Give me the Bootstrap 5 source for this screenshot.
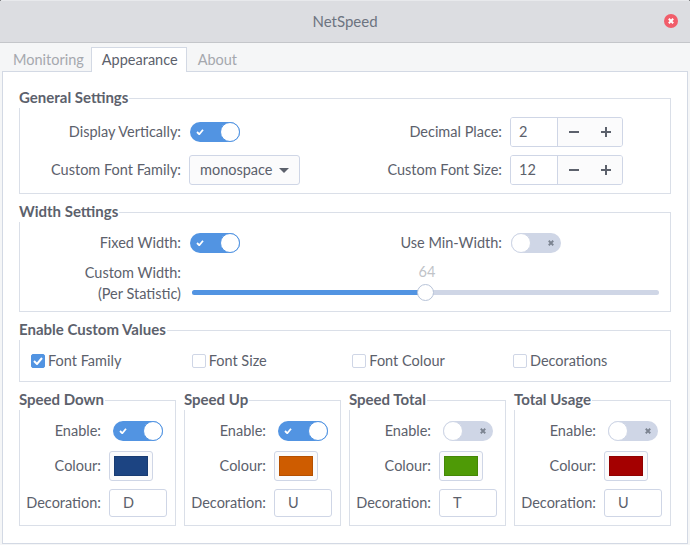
<!DOCTYPE html>
<html lang="en">
<head>
    <meta charset="UTF-8">
    <meta name="viewport" content="width=device-width, initial-scale=1.0">
    <title>NetSpeed</title>
    <link href="https://cdn.jsdelivr.net/npm/bootstrap@5.3.1/dist/css/bootstrap.min.css" rel="stylesheet">
    <style>
        html, body { height: 100%; margin: 0; overflow: hidden; }
        html { background: #2f3136; }
        body { background: #f5f6f7; color: #5c616c; font: 14.5px/20px Lato, sans-serif; border-radius: 2px 2px 0 0; }
        .win-title { height: 43px; background: #dcdde1; border-bottom: 1px solid #c4c6ca; border-top: 1px solid #e8e9ec; border-radius: 2px 2px 0 0; color: #6d7480; font-size: 15px; padding-bottom: 2px; }
        .win-close { right: 12px; top: 13px; width: 14px; height: 14px; }
        .tab-row { height: 29px; padding-left: 2px; }
        .tab-item { padding: 7px 7px 0 11px; color: #a5a8ae; height: 29px; }
        .tab-item.on { background: #fff; color: #5c616c; border: 1px solid #d3d9e4; border-bottom: 0; padding: 2px 8px 0 10px; margin-top: 4px; height: 25px; position: relative; z-index: 1; }
        .tab-body { background: #fff; border: 1px solid #d3d9e4; margin: -1px 2px 0 2px; height: 473px; padding: 16px 16px 0 16px; }
        fieldset.frame { border: 1px solid #dadfe8; margin: 0 0 8px 0; padding: 0; background: #fff; }
        fieldset.frame > legend { float: none; width: auto; margin: 0 0 0 -1px; padding: 0 1px 2px 0; font-size: 15px; line-height: 18px; font-weight: 700; color: #5c616c; }
        .set-row { display: flex; align-items: center; }
        .lbl-a, .lbl-b { text-align: right; margin-right: 8px; flex: none; }
        .lbl-a { width: 161px; }
        .lbl-b { width: 81px; }
        .col-a { width: 321px; flex: none; display: flex; align-items: center; }
        .tgl { width: 50px; height: 20px; border-radius: 10px; display: flex; align-items: center; justify-content: space-between; flex: none; margin-left: 1px; }
        .tgl.on { background: #5294e2; padding-left: 6px; }
        .tgl.off { background: #cfd6e6; flex-direction: row-reverse; padding-right: 7px; }
        .tgl .knob { width: 20px; height: 20px; border-radius: 50%; background: #fff; border: 1px solid #cfd6e6; }
        .tgl.on .knob { border-color: #5294e2; }
        .ctl { height: 30px; border: 1px solid #cfd6e6; border-radius: 3px; background: #fbfbfc; color: #5c616c; padding: 0 10px; font-size: 14.5px; display: flex; align-items: center; justify-content: space-between; }
        .ctl.caret-btn { width: 111px; }
        .caret-mark { width: 0; height: 0; border-left: 5px solid transparent; border-right: 5px solid transparent; border-top: 5px solid #5c616c; }
        .spin-box { display: flex; width: 113px; height: 30px; border: 1px solid #cfd6e6; border-radius: 3px; flex: none; overflow: hidden; }
        .spin-val { width: 47px; padding-left: 8px; background: #fff; border-right: 1px solid #cfd6e6; line-height: 28px; }
        .spin-btn { width: 32px; display: flex; align-items: center; justify-content: center; background: #fbfbfc; }
        .slide-box { position: relative; width: 467px; height: 5px; background: #cfd6e6; border-radius: 3px; margin-left: 3px; margin-top: 19px; flex: none; }
        .slide-fill { height: 5px; background: #5294e2; border-radius: 3px 0 0 3px; }
        .slide-knob { position: absolute; top: -6px; width: 17px; height: 17px; margin-left: -8px; border-radius: 50%; background: #fff; border: 1px solid #b7c3d8; }
        .slide-num { position: absolute; top: -28px; width: 40px; margin-left: -18px; text-align: center; color: #c0c3c8; }
        .chk-item { width: 160.67px; flex: none; display: flex; align-items: center; gap: 3px; }
        .chk-box { width: 14px; height: 14px; border-radius: 2px; border: 1px solid #cfd6e6; background: #fff; display: flex; align-items: center; justify-content: center; }
        .chk-box.on { background: #5294e2; border-color: #5294e2; }
        .stat-frame { width: 157px; flex: none; margin-bottom: 0 !important; }
        .swatch-btn { width: 44px; height: 30px; border: 1px solid #cfd6e6; border-radius: 3px; background: #fbfbfc; padding: 4px; }
        .swatch-btn span { display: block; width: 100%; height: 100%; border: 1px solid rgba(0,0,0,.12); }
        .deco-box { width: 58px; height: 28px; border: 1px solid #cfd6e6; border-radius: 3px; background: #fff; padding-left: 13px; line-height: 26px; }
        .frame-general { padding: 9px 0 8px; }
        .frame-width { padding: 11px 0 7px; }
        .width-slide { margin-top: 9px; }
        .width-slide .lbl-a { line-height: 21px; }
        .frame-check { padding: 11px 0 10px 11px; }
        .frame-stat { padding: 11px 0 8px; }
        .stat-tgl { margin-left: 4px; }
        .stat-mid { margin: 10px 0 8px; }
    </style>
</head>

<body>
    <div class="win-title position-relative d-flex align-items-center justify-content-center">
        <span>NetSpeed</span>
        <svg class="win-close position-absolute" viewBox="0 0 14 14"><circle cx="7" cy="7" r="7" fill="#f15d6a"/><path d="M4.8 4.8l4.4 4.4M9.2 4.8l-4.4 4.4" stroke="#fff" stroke-width="2"/></svg>
    </div>
    <div class="tab-row d-flex">
        <div class="tab-item">Monitoring</div>
        <div class="tab-item on">Appearance</div>
        <div class="tab-item">About</div>
    </div>
    <div class="tab-body">
        <fieldset class="frame">
            <legend>General Settings</legend>
            <div class="d-flex flex-column gap-2 frame-general">
                <div class="set-row">
                    <div class="col-a"><span class="lbl-a">Display Vertically:</span><div class="tgl on"><svg width="8" height="6" viewBox="0 0 10 8"><path d="M1 4l3 3 5-6" fill="none" stroke="#fff" stroke-width="2.4"/></svg><span class="knob"></span></div></div>
                    <span class="lbl-a">Decimal Place:</span>
                    <div class="spin-box"><span class="spin-val">2</span><span class="spin-btn"><svg width="10" height="10"><path d="M0 5h10" stroke="#5c616c" stroke-width="2"/></svg></span><span class="spin-btn"><svg width="10" height="10"><path d="M0 5h10M5 0v10" stroke="#5c616c" stroke-width="2"/></svg></span></div>
                </div>
                <div class="set-row">
                    <div class="col-a"><span class="lbl-a">Custom Font Family:</span><button class="ctl caret-btn">monospace<span class="caret-mark"></span></button></div>
                    <span class="lbl-a">Custom Font Size:</span>
                    <div class="spin-box"><span class="spin-val">12</span><span class="spin-btn"><svg width="10" height="10"><path d="M0 5h10" stroke="#5c616c" stroke-width="2"/></svg></span><span class="spin-btn"><svg width="10" height="10"><path d="M0 5h10M5 0v10" stroke="#5c616c" stroke-width="2"/></svg></span></div>
                </div>
            </div>
        </fieldset>
        <fieldset class="frame">
            <legend>Width Settings</legend>
            <div class="frame-width">
                <div class="set-row">
                    <div class="col-a"><span class="lbl-a">Fixed Width:</span><div class="tgl on"><svg width="8" height="6" viewBox="0 0 10 8"><path d="M1 4l3 3 5-6" fill="none" stroke="#fff" stroke-width="2.4"/></svg><span class="knob"></span></div></div>
                    <span class="lbl-a">Use Min-Width:</span>
                    <div class="tgl off"><svg width="6" height="6" viewBox="0 0 8 8"><path d="M1 1l6 6M7 1l-6 6" stroke="#7b8390" stroke-width="2.4"/></svg><span class="knob"></span></div>
                </div>
                <div class="set-row width-slide">
                    <span class="lbl-a">Custom Width:<br>(Per Statistic)</span>
                    <div class="slide-box">
                        <div class="slide-fill" style="width: 49.9%"></div>
                        <span class="slide-knob" style="left: 49.9%"></span>
                        <span class="slide-num" style="left: 49.9%">64</span>
                    </div>
                </div>
            </div>
        </fieldset>
        <fieldset class="frame">
            <legend>Enable Custom Values</legend>
            <div class="d-flex frame-check">
                <label class="chk-item"><span class="chk-box on"><svg width="10" height="8" viewBox="0 0 10 8"><path d="M1 4l3 3 5-6" fill="none" stroke="#fff" stroke-width="2"/></svg></span>Font Family</label>
                <label class="chk-item"><span class="chk-box"></span>Font Size</label>
                <label class="chk-item"><span class="chk-box"></span>Font Colour</label>
                <label class="chk-item"><span class="chk-box"></span>Decorations</label>
            </div>
        </fieldset>
        <div class="d-flex gap-2" id="stats"></div>
    </div>

    <script src="https://cdn.jsdelivr.net/npm/bootstrap@5.3.1/dist/js/bootstrap.bundle.min.js"></script>
    <script>
        const stats = [
            { name: 'Speed Down', on: true, colour: '#1c4482', deco: 'D' },
            { name: 'Speed Up', on: true, colour: '#ce5c00', deco: 'U' },
            { name: 'Speed Total', on: false, colour: '#4e9a06', deco: 'T' },
            { name: 'Total Usage', on: false, colour: '#a40000', deco: 'U' }
        ];
        const tick = '<svg width="8" height="6" viewBox="0 0 10 8"><path d="M1 4l3 3 5-6" fill="none" stroke="#fff" stroke-width="2.4"/></svg>';
        const cross = '<svg width="6" height="6" viewBox="0 0 8 8"><path d="M1 1l6 6M7 1l-6 6" stroke="#7b8390" stroke-width="2.4"/></svg>';
        document.getElementById('stats').innerHTML = stats.map(s => `
            <fieldset class="frame stat-frame">
                <legend>${s.name}</legend>
                <div class="frame-stat">
                    <div class="set-row"><span class="lbl-b">Enable:</span><div class="tgl ${s.on ? 'on' : 'off'} stat-tgl">${s.on ? tick : cross}<span class="knob"></span></div></div>
                    <div class="set-row stat-mid"><span class="lbl-b">Colour:</span><div class="swatch-btn"><span style="background: ${s.colour}"></span></div></div>
                    <div class="set-row"><span class="lbl-b">Decoration:</span><div class="deco-box">${s.deco}</div></div>
                </div>
            </fieldset>`).join('');
    </script>
</body>
</html>
